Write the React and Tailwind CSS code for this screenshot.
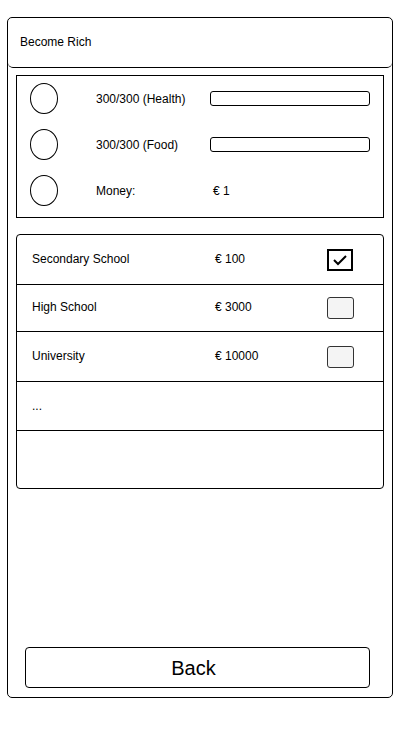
import React from 'react';

const stats = [
  { label: '300/300 (Health)', bar: true },
  { label: '300/300 (Food)', bar: true },
  { label: 'Money:', value: '€ 1' },
];

const courses = [
  { name: 'Secondary School', price: '€ 100', done: true },
  { name: 'High School', price: '€ 3000' },
  { name: 'University', price: '€ 10000' },
];

const Check = ({ done }) =>
  done ? (
    <div className="w-[26px] h-[22px] border-2 border-black bg-white flex items-center justify-center">
      <svg width="16" height="12" viewBox="0 0 16 12">
        <path d="M2 6 L6 10 L14 2" fill="none" stroke="black" strokeWidth="2" />
      </svg>
    </div>
  ) : (
    <div className="w-[27px] h-[22px] border border-[#333] rounded-[3px] bg-[#f4f4f4]" />
  );

export default function App() {
  return (
    <div className="w-[414px] h-[734px] bg-white pt-[17px] pl-[7px] text-[12px] text-black" style={{ fontFamily: '"Liberation Sans", Arial, sans-serif' }}>
      <div className="w-[386px] h-[681px] border border-black rounded-[5px] flex flex-col">
        <div className="h-[50px] shrink-0 border-b border-black rounded-[5px] flex items-center pl-[12px] pb-px">Become Rich</div>

        <div className="mx-[8px] mt-[7px] h-[143px] shrink-0 border border-black flex flex-col gap-[15px] pt-[7px]">
          {stats.map((s) => (
            <div key={s.label} className="h-[31px] shrink-0 flex items-center">
              <div className="ml-[13px] w-[28px] h-[31px] border border-black rounded-[50%]" />
              <div className="ml-[38px] w-[114px]">{s.label}</div>
              {s.bar ? (
                <div className="w-[160px] h-[15px] border border-black rounded-[3px]" />
              ) : (
                <div className="pl-[3px]">{s.value}</div>
              )}
            </div>
          ))}
        </div>

        <div className="mx-[8px] mt-[16px] h-[255px] shrink-0 border border-black rounded-[4px] flex flex-col">
          {courses.map((c, i) => (
            <div key={c.name} className={`${i === 1 ? 'h-[47px]' : 'h-[50px]'} shrink-0 border-b border-black flex items-center`}>
              <div className="pl-[15px] w-[198px] -mt-[2px]">{c.name}</div>
              <div className="w-[112px] -mt-[2px]">{c.price}</div>
              <Check done={c.done} />
            </div>
          ))}
          <div className="h-[50px] shrink-0 border-b border-black flex items-center pl-[15px] -mt-px">...</div>
        </div>

        <div className="flex-1" />
        <div className="ml-[17px] mr-[22px] mb-[9px] h-[41px] shrink-0 border border-black rounded-[4px] flex items-center justify-center pr-[8px] text-[20px]">Back</div>
      </div>
    </div>
  );
}
